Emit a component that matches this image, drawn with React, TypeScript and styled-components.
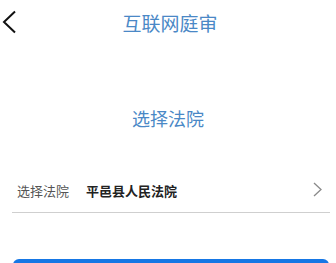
import styled, { createGlobalStyle } from 'styled-components'

const GlobalStyle = createGlobalStyle`
  html, body { margin: 0; padding: 0; background: #fff; }
  body { font-family: "Noto Sans CJK SC", "Noto Sans", sans-serif; overflow: hidden; }
`

const Page = styled.main`
  width: 336px; height: 263px; overflow: hidden;
`

const NavBar = styled.header`
  height: 44px; position: relative;
  display: flex; align-items: center; justify-content: center;
`

const BackBtn = styled.button`
  position: absolute; left: 0; top: 9px;
  border: 0; background: none; padding: 0 0 0 2px;
  width: 20px; height: 26px; display: flex; align-items: center;
`

const NavTitle = styled.h1`
  margin: 0; font-size: 19px; font-weight: 400; color: #4a88c6;
  line-height: 1; transform: translateX(2px);
`

const SectionTitle = styled.h2`
  margin: 63px 0 0; text-align: center; font-size: 18px; font-weight: 400;
  color: #4a88c6; line-height: 22px;
`

const Row = styled.div`
  margin: 44px 6px 0 12px;
  height: 34px; padding-bottom: 5px;
  display: flex; align-items: center;
  border-bottom: 1px solid #cfcfcf;
`

const Label = styled.span`
  padding-left: 5px; font-size: 13px; color: #555; width: 69px;
`

const Value = styled.span`
  flex: 1; font-size: 13px; font-weight: 700; color: #222;
`

const Arrow = styled.svg`
  margin-right: 8px; margin-top: -2px;
`

const Submit = styled.button`
  display: block; width: 316px;
  margin: 46px 7px 0 13px; height: 40px; border: 0;
  border-radius: 6px; background: #1677e5;
`

export default function App() {
  return (
    <>
      <GlobalStyle />
      <Page>
        <NavBar>
          <BackBtn aria-label="back">
            <svg width="14" height="24" viewBox="0 0 14 24">
              <path d="M13 1.5 L2 12 L13 22.5" fill="none" stroke="#111" strokeWidth="2" />
            </svg>
          </BackBtn>
          <NavTitle>互联网庭审</NavTitle>
        </NavBar>
        <SectionTitle>选择法院</SectionTitle>
        <Row>
          <Label>选择法院</Label>
          <Value>平邑县人民法院</Value>
          <Arrow width="9" height="15" viewBox="0 0 9 15">
            <path d="M1 1 L8 7.5 L1 14" fill="none" stroke="#8a8a8a" strokeWidth="1.3" />
          </Arrow>
        </Row>
        <Submit />
      </Page>
    </>
  )
}
